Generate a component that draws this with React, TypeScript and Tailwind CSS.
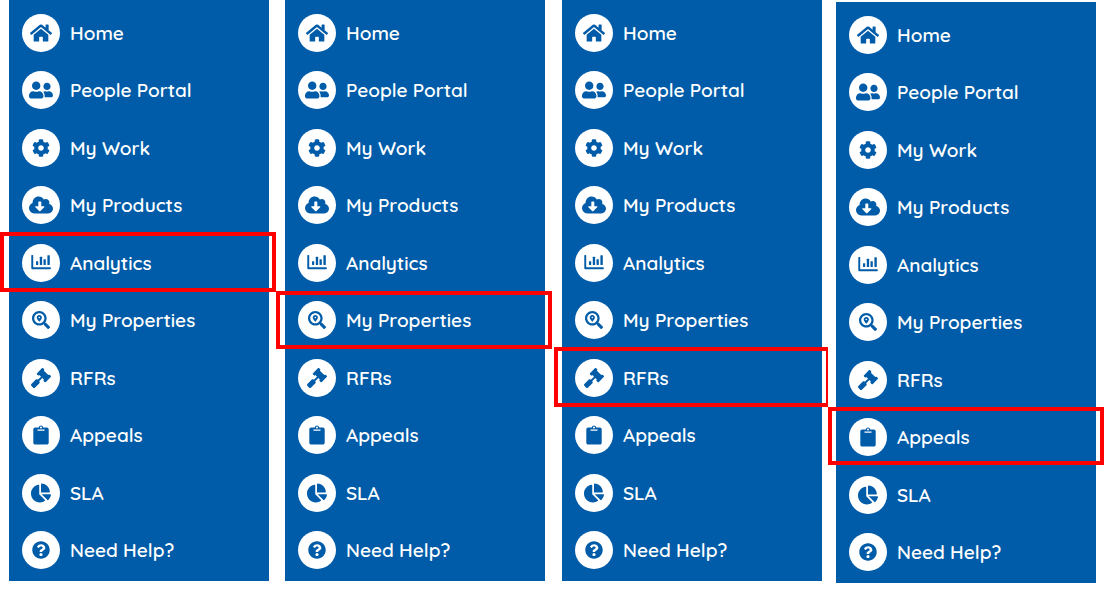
import type { ComponentType, SVGProps } from "react";
import {
  FaHome,
  FaUserFriends,
  FaCog,
  FaCloudDownloadAlt,
  FaSearchLocation,
  FaGavel,
  FaChartPie,
  FaQuestionCircle,
} from "react-icons/fa";

function BarsIcon(props: SVGProps<SVGSVGElement>) {
  return (
    <svg viewBox="0 0 20 20" fill="currentColor" {...props}>
      <path d="M.9 2h.7c.4 0 .6.2.6.6v11.6h17c.4 0 .6.2.6.6v.8c0 .4-.2.6-.6.6H1.2c-.6 0-.9-.4-.9-.9V2.6c0-.4.2-.6.6-.6z" />
      <rect x="5" y="8.2" width="2.2" height="3.8" rx=".4" />
      <rect x="8.8" y="3.8" width="2.3" height="8.2" rx=".4" />
      <rect x="12.5" y="6.2" width="2.3" height="5.8" rx=".4" />
      <rect x="16.4" y="2.2" width="2.4" height="9.8" rx=".4" />
    </svg>
  );
}

function ClipboardIcon(props: SVGProps<SVGSVGElement>) {
  return (
    <svg viewBox="0 0 20 20" fill="currentColor" {...props}>
      <path
        fillRule="evenodd"
        d="M4.2 2.4h3.6C8 1.2 8.8.4 10 .4s2 .8 2.2 2h3.6c1.1 0 1.9.8 1.9 1.9v13.4c0 1.1-.8 1.9-1.9 1.9H4.2c-1.1 0-1.9-.8-1.9-1.9V4.3c0-1.1.8-1.9 1.9-1.9zM10 1.4a1 1 0 1 0 0 2 1 1 0 0 0 0-2zM6.4 4.4v.9c0 .2.2.4.4.4h6.4c.2 0 .4-.2.4-.4v-.9z"
      />
    </svg>
  );
}

type Item = { label: string; icon: ComponentType<{ className?: string }>; size: string };

const items: Item[] = [
  { label: "Home", icon: FaHome, size: "size-[22px]" },
  { label: "People Portal", icon: FaUserFriends, size: "size-6" },
  { label: "My Work", icon: FaCog, size: "size-[18px]" },
  { label: "My Products", icon: FaCloudDownloadAlt, size: "size-6" },
  { label: "Analytics", icon: BarsIcon, size: "size-5" },
  { label: "My Properties", icon: FaSearchLocation, size: "size-[18px]" },
  { label: "RFRs", icon: FaGavel, size: "size-5" },
  { label: "Appeals", icon: ClipboardIcon, size: "size-5" },
  { label: "SLA", icon: FaChartPie, size: "size-5" },
  { label: "Need Help?", icon: FaQuestionCircle, size: "size-[18px]" },
];

type Menu = { marked: string; place: string; frame: string };

const menus: Menu[] = [
  { marked: "Analytics", place: "", frame: "-left-[9px] -right-[7px] -top-0.5 bottom-0 border-4" },
  { marked: "My Properties", place: "ml-4", frame: "-left-[9px] -right-[7px] -top-px bottom-0 border-4" },
  { marked: "RFRs", place: "ml-[17px]", frame: "-left-2 -right-1.5 -top-0.5 bottom-0 border-4 border-r-2" },
  { marked: "Appeals", place: "ml-3.5 mt-0.5", frame: "-left-2 -right-2 -top-0.5 bottom-px border-4" },
];

function SideMenu({ marked, place, frame }: Menu) {
  return (
    <nav aria-label={marked} className={`min-w-0 flex-1 bg-[#005ca8] pt-1 pb-0.5 ${place}`}>
      <ul className="grid min-h-[575px] grid-rows-[repeat(10,1fr)]">
        {items.map(({ label, icon: Icon, size }) => (
          <li key={label} className="relative flex">
            <a href="#" className="flex flex-1 items-center gap-2.5 pl-[13px] text-[19px] font-semibold text-white">
              <span className="flex size-[38px] shrink-0 items-center justify-center rounded-full bg-white text-[#005ca8]">
                <Icon className={size} aria-hidden="true" />
              </span>
              {label}
            </a>
            {label === marked && (
              <span className={`pointer-events-none absolute z-10 border-[#ff0000] ${frame}`} />
            )}
          </li>
        ))}
      </ul>
    </nav>
  );
}

export default function App() {
  return (
    <main className="flex min-h-screen items-start bg-white pr-4 pl-[9px] font-[Quicksand,Lato,sans-serif]">
      {menus.map((menu) => (
        <SideMenu key={menu.marked} {...menu} />
      ))}
    </main>
  );
}
